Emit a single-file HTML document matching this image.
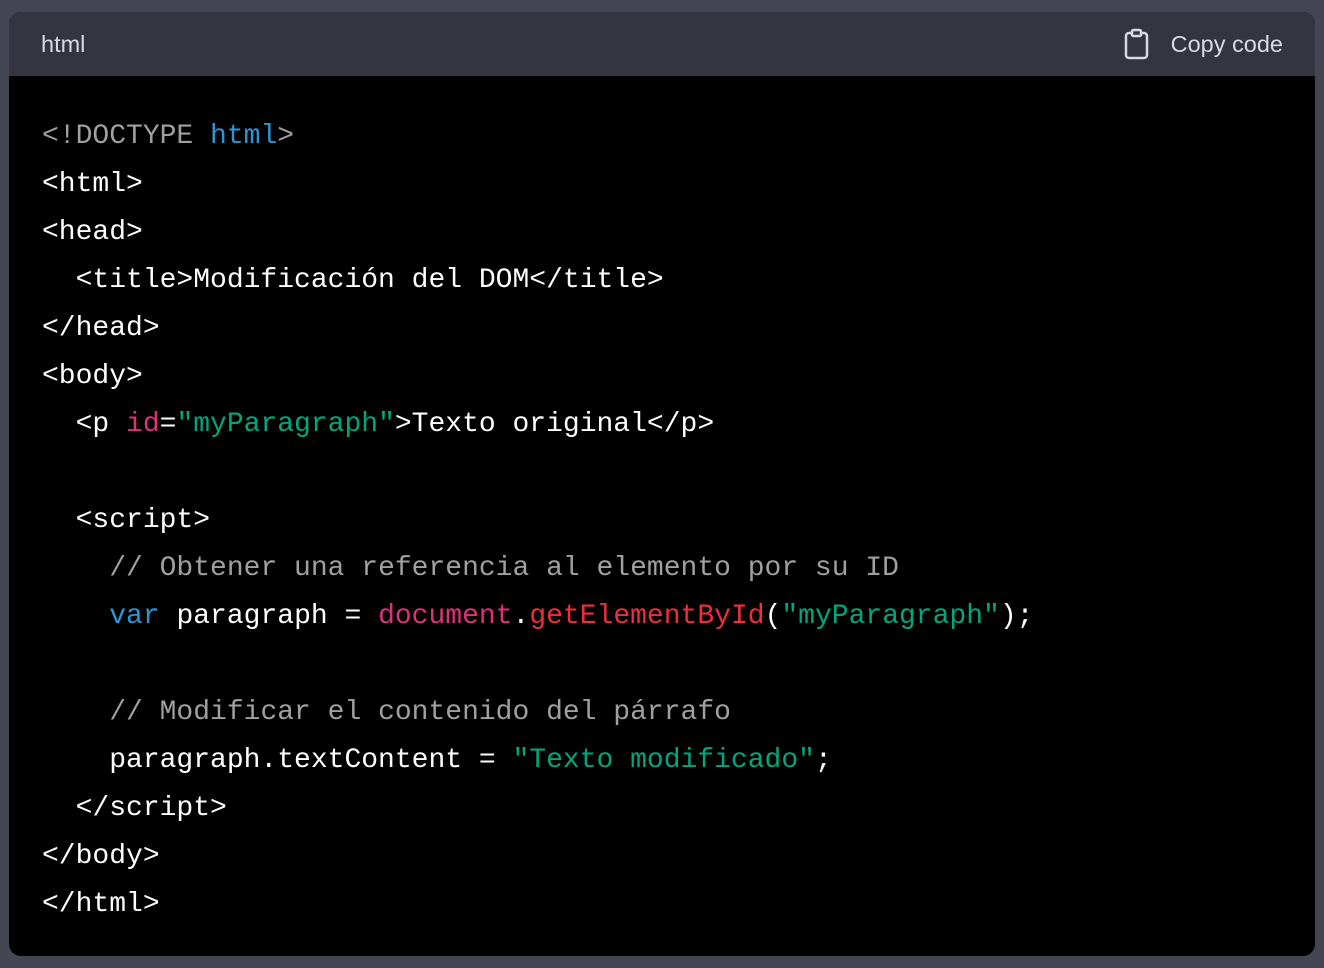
<!DOCTYPE html>
<html><head><style>
body{margin:0;background:#444654;width:1324px;height:968px;overflow:hidden}
.box{position:absolute;left:9px;top:12px;width:1306px;height:944px;border-radius:12px;overflow:hidden;background:#000}
.hd{height:64px;background:#343541;color:#d9d9e3;font:23.5px "Liberation Sans",sans-serif;position:relative}
.hd .l{position:absolute;left:32px;top:19px}
.hd .cp{position:absolute;right:32px;top:19px}
.hd svg{position:absolute;left:1114px;top:16px}
pre{margin:0;padding:37px 0 0 33px;font:28px/48px "Liberation Mono",monospace;color:#fff}
.g{color:#a0a0a0}.b{color:#2e95d3}.p{color:#df3079}.s{color:#00a67d}.r{color:#f22c3d}
</style></head><body>
<div class="box">
<div class="hd"><span class="l">html</span>
<svg width="28" height="32" viewBox="0 0 28 32" fill="none" stroke="#d9d9e3" stroke-width="2.5" stroke-linejoin="round"><rect x="3" y="5" width="21" height="25" rx="3"/><rect x="9" y="2" width="9" height="6" rx="1.5" fill="#343541"/></svg>
<span class="cp">Copy code</span></div>
<pre><span class="g">&lt;!DOCTYPE</span> <span class="b">html</span><span class="g">&gt;</span>
&lt;html&gt;
&lt;head&gt;
  &lt;title&gt;Modificación del DOM&lt;/title&gt;
&lt;/head&gt;
&lt;body&gt;
  &lt;p <span class="p">id</span>=<span class="s">"myParagraph"</span>&gt;Texto original&lt;/p&gt;

  &lt;script&gt;
    <span class="g">// Obtener una referencia al elemento por su ID</span>
    <span class="b">var</span> paragraph = <span class="p">document</span>.<span class="r">getElementById</span>(<span class="s">"myParagraph"</span>);

    <span class="g">// Modificar el contenido del párrafo</span>
    paragraph.textContent = <span class="s">"Texto modificado"</span>;
  &lt;/script&gt;
&lt;/body&gt;
&lt;/html&gt;</pre>
</div>
</body></html>
